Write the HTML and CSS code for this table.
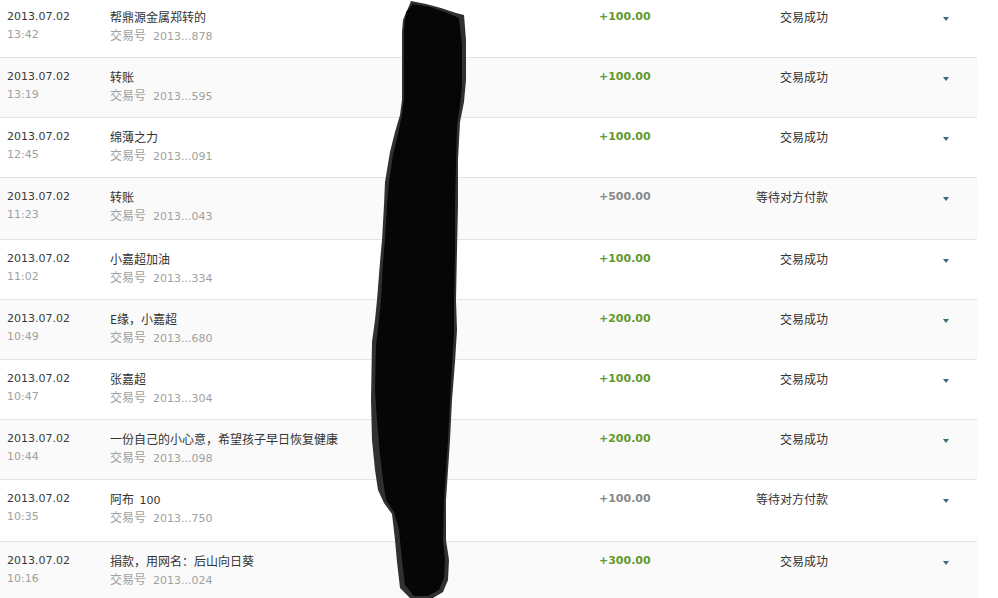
FILE: index.html
```html
<!DOCTYPE html>
<html lang="zh-CN">
<head>
    <meta charset="UTF-8">
    <title>交易记录</title>
    <link rel="stylesheet" href="styles.css">
</head>
<body>
    <div class="records">
        <div class="record-row">
            <div class="cell-date"><div class="date">2013.07.02</div><div class="time">13:42</div></div>
            <div class="cell-info"><div class="title">帮鼎源金属郑转的</div><div class="trade">交易号<span class="trade-no">2013...878</span></div></div>
            <div class="amount">+100.00</div>
            <div class="status">交易成功</div>
            <div class="cell-toggle"><span class="arrow"></span></div>
        </div>
        <div class="record-row">
            <div class="cell-date"><div class="date">2013.07.02</div><div class="time">13:19</div></div>
            <div class="cell-info"><div class="title">转账</div><div class="trade">交易号<span class="trade-no">2013...595</span></div></div>
            <div class="amount">+100.00</div>
            <div class="status">交易成功</div>
            <div class="cell-toggle"><span class="arrow"></span></div>
        </div>
        <div class="record-row">
            <div class="cell-date"><div class="date">2013.07.02</div><div class="time">12:45</div></div>
            <div class="cell-info"><div class="title">绵薄之力</div><div class="trade">交易号<span class="trade-no">2013...091</span></div></div>
            <div class="amount">+100.00</div>
            <div class="status">交易成功</div>
            <div class="cell-toggle"><span class="arrow"></span></div>
        </div>
        <div class="record-row pending">
            <div class="cell-date"><div class="date">2013.07.02</div><div class="time">11:23</div></div>
            <div class="cell-info"><div class="title">转账</div><div class="trade">交易号<span class="trade-no">2013...043</span></div></div>
            <div class="amount">+500.00</div>
            <div class="status">等待对方付款</div>
            <div class="cell-toggle"><span class="arrow"></span></div>
        </div>
        <div class="record-row">
            <div class="cell-date"><div class="date">2013.07.02</div><div class="time">11:02</div></div>
            <div class="cell-info"><div class="title">小嘉超加油</div><div class="trade">交易号<span class="trade-no">2013...334</span></div></div>
            <div class="amount">+100.00</div>
            <div class="status">交易成功</div>
            <div class="cell-toggle"><span class="arrow"></span></div>
        </div>
        <div class="record-row">
            <div class="cell-date"><div class="date">2013.07.02</div><div class="time">10:49</div></div>
            <div class="cell-info"><div class="title">E缘，小嘉超</div><div class="trade">交易号<span class="trade-no">2013...680</span></div></div>
            <div class="amount">+200.00</div>
            <div class="status">交易成功</div>
            <div class="cell-toggle"><span class="arrow"></span></div>
        </div>
        <div class="record-row">
            <div class="cell-date"><div class="date">2013.07.02</div><div class="time">10:47</div></div>
            <div class="cell-info"><div class="title">张嘉超</div><div class="trade">交易号<span class="trade-no">2013...304</span></div></div>
            <div class="amount">+100.00</div>
            <div class="status">交易成功</div>
            <div class="cell-toggle"><span class="arrow"></span></div>
        </div>
        <div class="record-row">
            <div class="cell-date"><div class="date">2013.07.02</div><div class="time">10:44</div></div>
            <div class="cell-info"><div class="title">一份自己的小心意，希望孩子早日恢复健康</div><div class="trade">交易号<span class="trade-no">2013...098</span></div></div>
            <div class="amount">+200.00</div>
            <div class="status">交易成功</div>
            <div class="cell-toggle"><span class="arrow"></span></div>
        </div>
        <div class="record-row pending">
            <div class="cell-date"><div class="date">2013.07.02</div><div class="time">10:35</div></div>
            <div class="cell-info"><div class="title">阿布&nbsp;&nbsp;<span class="latin">100</span></div><div class="trade">交易号<span class="trade-no">2013...750</span></div></div>
            <div class="amount">+100.00</div>
            <div class="status">等待对方付款</div>
            <div class="cell-toggle"><span class="arrow"></span></div>
        </div>
        <div class="record-row">
            <div class="cell-date"><div class="date">2013.07.02</div><div class="time">10:16</div></div>
            <div class="cell-info"><div class="title">捐款，用网名：后山向日葵</div><div class="trade">交易号<span class="trade-no">2013...024</span></div></div>
            <div class="amount">+300.00</div>
            <div class="status">交易成功</div>
            <div class="cell-toggle"><span class="arrow"></span></div>
        </div>
    </div>

    <!-- hand-drawn redaction over the middle of the list -->
    <svg class="redaction" width="998" height="598" viewBox="0 0 998 598">
        <path fill="#303030" d="M402 32 L403 20 L409 6 L411 1 L426 4 L441 8 L456 13 L464 15 L466 40 L466 80 L464 102 L460 122 L458 160 L458 205 L457 250 L456 300 L457 330 L455 362 L452 400 L450 440 L448 470 L446 500 L446 540 L449 560 L448 580 L443 592 L433 598 L410 598 L400 588 L397 562 L395 540 L392 514 L384 503 L378 490 L375 470 L372 440 L371 400 L372 342 L375 320 L377 300 L380 262 L382 240 L384 205 L385 182 L390 152 L395 132 L400 115 L402 100 L402 60 Z"/>
        <path fill="#060606" d="M404 30 L406 12 L413 4 L430 7 L445 12 L459 18 L462 45 L462 85 L460 105 L457 125 L456 165 L455 210 L455 255 L454 300 L454 335 L452 365 L450 400 L448 440 L446 470 L444 500 L443 540 L445 560 L444 578 L439 590 L428 596 L414 596 L405 585 L402 560 L399 530 L394 512 L386 500 L383 480 L380 455 L377 420 L375 390 L376 345 L379 320 L381 300 L383 262 L385 240 L387 205 L389 182 L393 155 L398 134 L402 115 L404 98 L404 60 Z"/>
    </svg>
</body>
</html>
```

FILE: styles.css
```css
:root {
    --text-main: #333333;
    --text-muted: #a0a0a0;
    --row-alt: #fafafa;
    --row-border: #e4e4e4;
    --amount-in: #64982a;
    --amount-wait: #888888;
    --arrow: #3c6c7b;
}

* {
    margin: 0;
    padding: 0;
    box-sizing: border-box;
}

body {
    background: #ffffff;
    color: var(--text-main);
    font-family: "Noto Sans CJK SC", sans-serif;
    font-size: 12px;
    width: 998px;
    height: 598px;
    overflow: hidden;
    position: relative;
}

.records {
    width: 977px;
    margin-top: -2px;
}

/* One transaction */
.record-row {
    display: grid;
    grid-template-columns: 103px 489px 109px 120px 122px;
    height: 60px;
    padding: 10px 0 0 7px;
    border-bottom: 1px solid var(--row-border);
    line-height: 18px;
}

.record-row:nth-child(even) {
    background-color: var(--row-alt);
}

.record-row.pending {
    height: 62px;
}

.date,
.time,
.trade-no,
.latin {
    font-family: "DejaVu Sans", sans-serif;
    font-size: 11px;
}

/* keep latin runs inside the CJK line box */
.trade-no,
.latin {
    line-height: 1;
}

.date {
    color: #3a3a3a;
}

.time {
    color: var(--text-muted);
}

.title {
    color: var(--text-main);
}

.trade {
    color: var(--text-muted);
}

.trade-no {
    margin-left: 7px;
}

.amount {
    font-family: "DejaVu Sans", sans-serif;
    font-size: 11px;
    font-weight: 700;
    color: var(--amount-in);
}

.pending .amount {
    color: var(--amount-wait);
}

.status {
    text-align: right;
    color: var(--text-main);
}

/* expand toggle at the far right */
.cell-toggle {
    padding: 9px 0 0 115px;
}

.arrow {
    display: block;
    width: 0;
    height: 0;
    border-left: 3.5px solid transparent;
    border-right: 3.5px solid transparent;
    border-top: 4px solid var(--arrow);
}

.redaction {
    position: absolute;
    top: 0;
    left: 0;
    pointer-events: none;
}
```
